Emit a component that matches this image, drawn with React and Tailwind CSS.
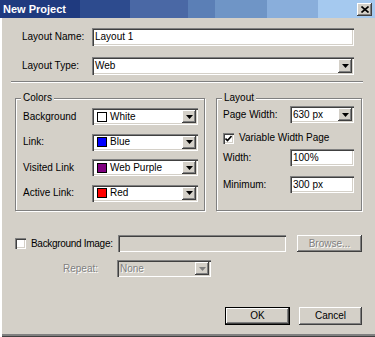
const sunken =
  "shadow-[inset_1px_1px_0_#808080,inset_2px_2px_0_#404040,inset_-1px_-1px_0_#ffffff,inset_-2px_-2px_0_#d4d0c8]";
const raised =
  "shadow-[inset_-1px_-1px_0_#404040,inset_1px_1px_0_#ffffff,inset_-2px_-2px_0_#808080]";
const disabledText = "text-[#808080] [text-shadow:1px_1px_0_#ffffff]";

const Arrow = ({ disabled }) => (
  <svg width="7" height="4" viewBox="0 0 7 4">
    <path d="M0 0h7L3.5 4z" fill={disabled ? "#808080" : "#000"} />
  </svg>
);

const DropButton = ({ disabled }) => (
  <div
    className={`absolute right-[2px] top-[2px] bottom-[2px] w-[14px] bg-[#d4d0c8] flex items-center justify-center ${raised}`}
  >
    <Arrow disabled={disabled} />
  </div>
);

const Select = ({ width, height = "h-[17px]", children, disabled }) => (
  <div
    className={`relative ${width} ${height} ${disabled ? "bg-[#d4d0c8]" : "bg-white"} ${sunken} flex items-center pl-[3px]`}
  >
    {children}
    <DropButton disabled={disabled} />
  </div>
);

const ColorSelect = ({ swatch, label }) => (
  <Select width="w-[106px]">
    <div className="flex items-center gap-[3px] pl-[2px]">
      <span className={`w-[10px] h-[10px] border border-black ${swatch}`} />
      <span>{label}</span>
    </div>
  </Select>
);

const TextBox = ({ width, height = "h-[17px]", value, disabled }) => (
  <div
    className={`${width} ${height} ${disabled ? "bg-[#d4d0c8]" : "bg-white"} ${sunken} flex items-center pl-[3px]`}
  >
    {value}
  </div>
);

const Checkbox = ({ checked }) => (
  <div className={`w-[11px] h-[11px] bg-white ${sunken} flex items-center justify-center`}>
    {checked && (
      <svg width="7" height="7" viewBox="0 0 7 7">
        <path d="M0.5 3.5l2 2 4-4.5" stroke="#000" strokeWidth="1.6" fill="none" />
      </svg>
    )}
  </div>
);

const GroupBox = ({ title, width, children }) => (
  <div
    className={`relative ${width} h-[113px] border border-[#808080] shadow-[1px_1px_0_#ffffff,inset_1px_1px_0_#ffffff]`}
  >
    <span className="absolute -top-[7px] left-[5px] bg-[#d4d0c8] px-[2px] leading-[12px]">
      {title}
    </span>
    {children}
  </div>
);

const Row = ({ label, labelWidth, children }) => (
  <div className="flex items-center">
    <span className={labelWidth}>{label}</span>
    {children}
  </div>
);

export default function App() {
  return (
    <div className="w-[375px] h-[337px] bg-[#d4d0c8] flex flex-col font-['Liberation_Sans',Arial,sans-serif] text-[10px] leading-none text-black shadow-[inset_2px_0_0_#ffffff,inset_1px_0_0_#d4d0c8,inset_0_-1px_0_#404040,inset_0_-3px_0_#808080] overflow-hidden">
      {/* Title bar */}
      <div className="h-[18px] flex items-center justify-between pl-[3px] pr-[3px] bg-[linear-gradient(90deg,#1f3a7f_0px,#1f3a7f_80px,#2d4b8e_80px,#2d4b8e_130px,#4a68a5_130px,#4a68a5_188px,#5b7fb6_188px,#5b7fb6_215px,#6f95c6_215px,#6f95c6_267px,#89aedb_267px,#89aedb_318px,#a5c9ef_318px)]">
        <span className="text-white font-bold text-[11px]">New Project</span>
        <div className={`w-[15px] h-[13px] bg-[#d4d0c8] flex items-center justify-center ${raised}`}>
          <svg width="8" height="7" viewBox="0 0 8 7">
            <path d="M0.5 0.5l7 6M7.5 0.5l-7 6" stroke="#000" strokeWidth="1.6" />
          </svg>
        </div>
      </div>

      {/* Name / Type */}
      <div className="flex flex-col pl-[22px] pt-[10px] gap-[11px]">
        <Row label="Layout Name:" labelWidth="w-[70px]">
          <TextBox width="w-[262px]" height="h-[18px]" value="Layout 1" />
        </Row>
        <Row label="Layout Type:" labelWidth="w-[70px]">
          <Select width="w-[262px]" height="h-[18px]">
            <span>Web</span>
          </Select>
        </Row>
      </div>

      <div className="ml-[11px] mt-[6px] w-[352px] h-[2px] border-t border-[#808080] border-b border-b-white" />

      {/* Group boxes */}
      <div className="flex pl-[15px] mt-[15px] gap-[11px]">
        <GroupBox title="Colors" width="w-[190px]">
          <div className="flex flex-col pl-[7px] pt-[9px] gap-[8.5px]">
            <Row label="Background" labelWidth="w-[69px]">
              <ColorSelect swatch="bg-white" label="White" />
            </Row>
            <Row label="Link:" labelWidth="w-[69px]">
              <ColorSelect swatch="bg-[#0000ff]" label="Blue" />
            </Row>
            <Row label="Visited Link" labelWidth="w-[69px]">
              <ColorSelect swatch="bg-[#800080]" label="Web Purple" />
            </Row>
            <Row label="Active Link:" labelWidth="w-[69px]">
              <ColorSelect swatch="bg-[#ff0000]" label="Red" />
            </Row>
          </div>
        </GroupBox>

        <GroupBox title="Layout" width="w-[146px]">
          <div className="flex flex-col pl-[6px] pt-[7px]">
            <Row label="Page Width:" labelWidth="w-[67px]">
              <Select width="w-[64px]">
                <span>630 px</span>
              </Select>
            </Row>
            <div className="flex items-center gap-[5px] mt-[9px] h-[12px]">
              <Checkbox checked />
              <span>Variable Width Page</span>
            </div>
            <div className="mt-[5px]">
              <Row label="Width:" labelWidth="w-[67px]">
                <TextBox width="w-[64px]" value="100%" />
              </Row>
            </div>
            <div className="mt-[10px]">
              <Row label="Minimum:" labelWidth="w-[67px]">
                <TextBox width="w-[64px]" value="300 px" />
              </Row>
            </div>
          </div>
        </GroupBox>
      </div>

      {/* Background image */}
      <div className="flex items-center pl-[15px] mt-[24px]">
        <Checkbox />
        <span className="ml-[5px] w-[87px] tracking-[-0.3px]">Background Image:</span>
        <TextBox width="w-[168px]" disabled />
        <div
          className={`ml-[11px] w-[65px] h-[17px] flex items-center justify-center ${raised} ${disabledText}`}
        >
          Browse...
        </div>
      </div>

      <div className="flex items-center pl-[63px] mt-[8px]">
        <span className={`w-[54px] ${disabledText}`}>Repeat:</span>
        <Select width="w-[94px]" disabled>
          <span className={disabledText}>None</span>
        </Select>
      </div>

      {/* Buttons */}
      <div className="flex justify-end gap-[9px] pr-[13px] mt-[30px]">
        <div className="w-[65px] h-[18px] border border-black">
          <div className={`w-full h-full flex items-center justify-center ${raised}`}>OK</div>
        </div>
        <div className={`w-[63px] h-[18px] flex items-center justify-center ${raised}`}>Cancel</div>
      </div>
    </div>
  );
}
